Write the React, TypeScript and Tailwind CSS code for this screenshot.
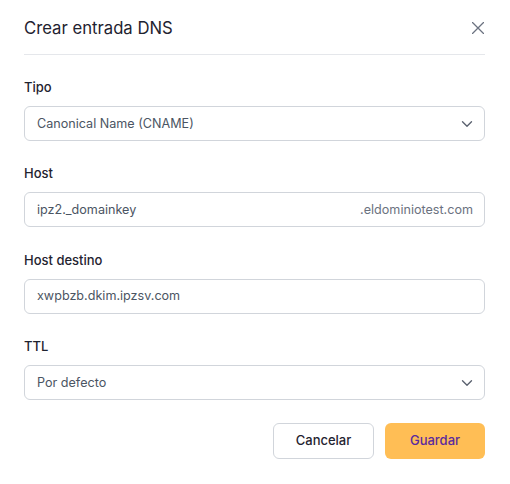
import React from "react";

function Chevron() {
  return (
    <svg width="18" height="18" viewBox="0 0 24 24" fill="none" stroke="#5b6270" strokeWidth="1.8" strokeLinecap="round" strokeLinejoin="round" className="-mt-px">
      <path d="m6 9 6 6 6-6" />
    </svg>
  );
}

function Field({ label, children }: { label: string; children: React.ReactNode }) {
  return (
    <div className="flex flex-col">
      <div className="h-5 text-[13px] leading-5 font-medium text-[#1f2330]">{label}</div>
      <div className="mt-[9px]">{children}</div>
    </div>
  );
}

export default function App() {
  return (
    <div className="w-[510px] h-[484px] bg-white pl-6 pr-[25px]" style={{ fontFamily: "Inter, 'Noto Sans', sans-serif" }}>
      <div className="flex items-center justify-between pt-4 pb-[14px] border-b border-[#e5e7eb]">
        <div className="text-[16.7px] leading-6 text-[#1f2330] font-normal">Crear entrada DNS</div>
        <svg width="12" height="12" viewBox="0 0 12 12" fill="none" stroke="#6b7280" strokeWidth="1.3" strokeLinecap="round" className="mr-[1px]">
          <path d="M11.5 0.5 0.5 11.5M0.5 0.5l11 11" />
        </svg>
      </div>
      <div className="flex flex-col gap-[22.4px] pt-[22px]">
        <Field label="Tipo">
          <div className="h-[35px] rounded-md border border-[#d1d5db] flex items-center justify-between pl-3 pr-[8px] pt-px text-[12.6px] text-[#4b5563]">
            <span>Canonical Name (CNAME)</span>
            <Chevron />
          </div>
        </Field>
        <Field label="Host">
          <div className="h-[35px] rounded-md border border-[#d1d5db] flex items-center justify-between pl-3 pr-[11px] pt-px text-[12.6px] text-[#4b5563]">
            <span>ipz2._domainkey</span>
            <span className="text-[#6b7280]">.eldominiotest.com</span>
          </div>
        </Field>
        <Field label="Host destino">
          <div className="h-[35px] rounded-md border border-[#d1d5db] flex items-center pl-3 pt-px text-[12.6px] text-[#4b5563]">
            <span>xwpbzb.dkim.ipzsv.com</span>
          </div>
        </Field>
        <Field label="TTL">
          <div className="h-[35px] rounded-md border border-[#d1d5db] flex items-center justify-between pl-3 pr-[8px] pt-px text-[12.6px] text-[#4b5563]">
            <span>Por defecto</span>
            <Chevron />
          </div>
        </Field>
        <div className="flex justify-end gap-[11px]">
          <button className="w-[101px] h-[36px] rounded-md border border-[#d1d5db] bg-white text-[13px] font-medium text-[#1f2330]">Cancelar</button>
          <button className="w-[100px] h-[36px] rounded-md bg-[#ffbe55] text-[13px] font-medium text-[#5b2a9e]">Guardar</button>
        </div>
      </div>
    </div>
  );
}
